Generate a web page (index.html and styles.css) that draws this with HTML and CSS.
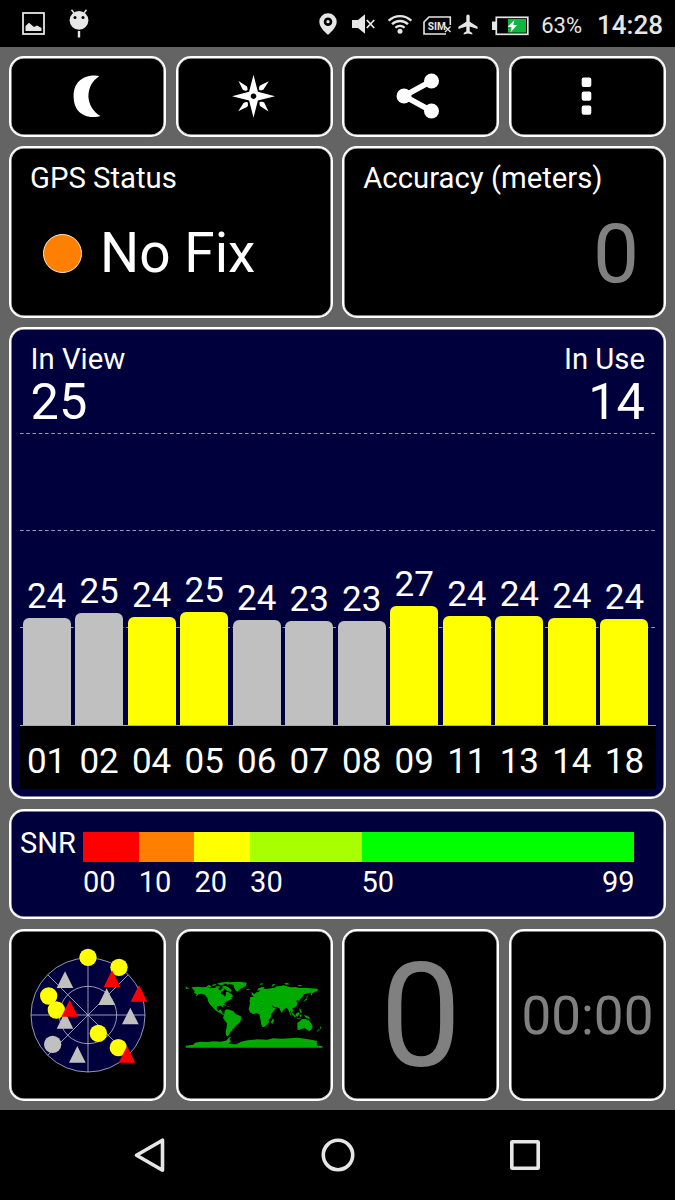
FILE: index.html
```html
<!DOCTYPE html>
<html lang="en">
<head>
  <meta charset="UTF-8">
  <meta name="viewport" content="width=device-width, initial-scale=1.0">
  <title>GPS Test</title>
  <link rel="stylesheet" href="styles.css">
</head>
<body>
  <header class="status-bar">
    <div class="notifications">
      <svg width="23" height="23" viewBox="0 0 23 23"><rect x="1" y="1" width="21" height="21" fill="none" stroke="currentColor" stroke-width="1.8"/><path d="M3.5 19v-5l3.5-3.2 5 4.2 3-1.6 4.5 2.6v3z" fill="currentColor"/></svg>
      <svg class="droid" width="20" height="29" viewBox="0 0 20 29"><circle cx="10" cy="11.3" r="9.4" fill="currentColor"/><path d="M5 4L2.5 .8M15 4l2.5-3.2" stroke="currentColor" stroke-width="1.4"/><path d="M10 22v6.5" stroke="currentColor" stroke-width="2.4"/><circle cx="6" cy="8.6" r="1.5"/><circle cx="14" cy="8.6" r="1.5"/></svg>
    </div>
    <div class="system">
      <svg width="18" height="22" viewBox="0 0 18 22"><path d="M9 .3a8.6 8.6 0 0 0-8.7 8.6C.3 14.8 9 21.8 9 21.8s8.7-7 8.7-12.9A8.6 8.6 0 0 0 9 .3z" fill="currentColor"/><circle cx="9" cy="8.7" r="4.3"/><circle cx="9" cy="8.7" r="1.6" fill="currentColor"/></svg>
      <svg class="mute" width="23" height="20" viewBox="0 0 23 20"><path d="M0 6h6l7-5.8v19.6L6 14H0z" fill="currentColor"/><path d="M14.8 6l7.4 8M22.2 6l-7.4 8" stroke="currentColor" stroke-width="1.8"/></svg>
      <svg class="wifi" width="24" height="20" viewBox="0 0 24 20"><g fill="none" stroke="currentColor" stroke-width="2.3"><path d="M.7 6.7a16 16 0 0 1 22.6 0M4 10.3a11.3 11.3 0 0 1 16 0M7.400 13.7a6.5 6.5 0 0 1 9.2 0"/></g><circle cx="12" cy="17.2" r="2.5" fill="currentColor"/></svg>
      <svg class="sim" width="29" height="19" viewBox="0 0 29 19"><path d="M23 18H1V6l5-5h21.3v8" fill="none" stroke="currentColor" stroke-width="1.6"/><text x="4.8" y="14" font-size="11" font-weight="700" textLength="18" lengthAdjust="spacingAndGlyphs" fill="currentColor">SIM</text><path d="M22 10.5l5.500 5.5M27.5 10.5L22 16" stroke="currentColor" stroke-width="1.4"/></svg>
      <svg class="plane" width="20" height="21" viewBox="0 0 20 21"><path d="M8.300 2.2a1.7 1.7 0 0 1 3.4 0v5.6l7.9 4.9v2.2l-7.9-2.5v4.800l2.6 1.8v1.5L10 19.500l-4.3 1v-1.5l2.6-1.8v-4.8L.4 14.900v-2.200l7.9-4.9z" fill="currentColor"/></svg>
      <svg class="battery" width="37" height="20" viewBox="0 0 37 20"><path d="M0 5.5h4v8.5H0z" fill="currentColor"/><rect x="4.3" y="1.3" width="31.5" height="17" fill="none" stroke="currentColor" stroke-width="1.7"/><path d="M16 3h18v13.6H16z" fill="#0fb83c"/><path d="M22.5 4l-7 7h4l-1 5.5 6.500-7.5h-3.7z" fill="#fff"/></svg>
      <span class="percent">63%</span>
      <span class="clock">14:28</span>
    </div>
  </header>

  <main class="dashboard">
    <button class="card action">
      <svg width="50" height="50" viewBox="0 0 50 50"><path d="M36.3 5.2C30 3 10.600 4.500 10.600 25.200S29 48 37.500 45A23 23 0 0 1 36.300 5.200z"/></svg>
    </button>
    <button class="card action">
      <svg width="50" height="50" viewBox="0 0 50 50">
        <path fill-rule="evenodd" d="M24.5 3.7l4.4 17.1L46 25.200l-17.100 4.400-4.400 17.100-4.400-17.100L3 25.200l17.100-4.400zM24.500 22.400a2.800 2.800 0 1 0 .01 0z"/>
        <path id="ray" d="M9.500 9.900l8.500 5.500q1.300 4-.3 4.200-3 .5-4-1z"/>
        <use href="#ray" transform="rotate(90 24.5 25.2)"/>
        <use href="#ray" transform="rotate(180 24.5 25.2)"/>
        <use href="#ray" transform="rotate(270 24.5 25.2)"/>
      </svg>
    </button>
    <button class="card action">
      <svg width="50" height="50" viewBox="0 0 50 50"><path d="M35.5 10L8 25l27.5 15" fill="none" stroke="#fff" stroke-width="5.5"/><circle cx="8" cy="25" r="7.5"/><circle cx="35.5" cy="10" r="7.5"/><circle cx="35.5" cy="40" r="7.5"/></svg>
    </button>
    <button class="card action">
      <svg width="50" height="50" viewBox="0 0 50 50"><rect x="19.7" y="6.6" width="9.6" height="9.3" rx="2"/><rect x="19.7" y="20.5" width="9.6" height="9.3" rx="2"/><rect x="19.7" y="34.4" width="9.6" height="9.3" rx="2"/></svg>
    </button>

    <section class="card reading">
      <div class="label">GPS Status</div>
      <div class="fix"><span class="led"></span>No Fix</div>
    </section>
    <section class="card reading">
      <div class="label">Accuracy (meters)</div>
      <div class="accuracy">0</div>
    </section>

    <section class="card satellites">
      <div class="counts">
        <div class="count">
          <div class="label">In View</div>
          <div class="total">25</div>
        </div>
        <div class="count right">
          <div class="label">In Use</div>
          <div class="total">14</div>
        </div>
      </div>
      <div class="chart">
        <div class="sat"><span>24</span><div class="bar" style="height: 107px"></div></div>
        <div class="sat"><span>25</span><div class="bar" style="height: 112px"></div></div>
        <div class="sat"><span>24</span><div class="bar used" style="height: 108.3px"></div></div>
        <div class="sat"><span>25</span><div class="bar used" style="height: 113.3px"></div></div>
        <div class="sat"><span>24</span><div class="bar" style="height: 105px"></div></div>
        <div class="sat"><span>23</span><div class="bar" style="height: 104.4px"></div></div>
        <div class="sat"><span>23</span><div class="bar" style="height: 104.4px"></div></div>
        <div class="sat"><span>27</span><div class="bar used" style="height: 119.5px"></div></div>
        <div class="sat"><span>24</span><div class="bar used" style="height: 108.8px"></div></div>
        <div class="sat"><span>24</span><div class="bar used" style="height: 109.5px"></div></div>
        <div class="sat"><span>24</span><div class="bar used" style="height: 106.8px"></div></div>
        <div class="sat"><span>24</span><div class="bar used" style="height: 105.6px"></div></div>
      </div>
      <div class="ids">
        <span>01</span><span>02</span><span>04</span><span>05</span><span>06</span><span>07</span>
        <span>08</span><span>09</span><span>11</span><span>13</span><span>14</span><span>18</span>
      </div>
    </section>

    <section class="card snr">
      <div class="snr-label">SNR</div>
      <div class="scale">
        <div class="step red"></div>
        <div class="step orange"></div>
        <div class="step yellow"></div>
        <div class="step lime"></div>
        <div class="step green"></div>
        <span>00</span>
        <span>10</span>
        <span>20</span>
        <span>30</span>
        <span class="ends"><b>50</b><b>99</b></span>
      </div>
    </section>

    <section class="card tile">
      <!-- Sky view -->
      <svg class="sky" width="130" height="130" viewBox="0 0 390 390">
        <g fill="#00003c" stroke="#b4b4cc" stroke-width="2.5">
          <circle cx="195" cy="195" r="171"/>
          <circle cx="195" cy="195" r="86"/>
          <path d="M195 24v342M24 195h342M74 74l242 242M316 74L74 316"/>
        </g>
        <g fill="#c0c0c0">
          <path d="M126 64l25 50h-50zM251 115l25 50h-50zM322 173l25 50h-50zM126 186l25 50h-50zM163 288l25 50h-50z"/>
          <circle cx="89" cy="283" r="26"/>
        </g>
        <g fill="#ff0">
          <circle cx="195" cy="22" r="26"/>
          <circle cx="288" cy="52" r="26"/>
          <circle cx="77" cy="138" r="26"/>
          <circle cx="100" cy="180" r="26"/>
          <circle cx="226" cy="250" r="26"/>
          <circle cx="286" cy="293" r="26"/>
        </g>
        <path fill="#f00" d="M267 61l25 50h-50zM348 105l25 50h-50zM140 150l25 50h-50zM312 288l25 50h-50z"/>
      </svg>
    </section>
    <section class="card tile">
      <svg width="138" height="67" viewBox="38 67 414 201" fill="#00aa00">
        <!-- Americas -->
        <path d="M40 82l5 5 7 4-12-1zM57 86l20-2 14 2 12-1 10 4 14-2 11 1 2 6 6 1 3-7 7 2-3 6-6 3-2 6 8 3 5 6 3-6-1-7 6-2 7 5 4 2 6 7-8 4 6 3-9 4-8 4-8 5-4 6 1 7-4-1-3-4-10 1-3 4 1 7 4 4 4-4 5-1-1 5 4 2 1 6 6 4-4 1-8-6-9-4-8-6-8-10-6-5-7-11-2-11-7-8-10-4-8 1-10 8 3-7-8-4 2-5-3-4z"/>
        <path d="M103 82l8-3 6 4-4 4-9-1zM118 79l10-3 5 3-10 3zM128 84l12-2 3 5-12 1zM133 75l17-4 22-2-5 4-17 3 7 3-12 1zM150 83l10-1 10 5 8 8-4 6-5-5-5 1-6-6-7-2zM162 73l18-3 22-1 21 3-2 9-6 4-12 6-7 8-5-2-7-12 1-6-12-2-9 1z"/>
        <path d="M147 137l7-2 9 5-4 1-12-4zM164 142l6 1-2 2zM157 156l6-4 8 1 12 5 7 9 9 3 8 4-1 8-4 10-10 7-7 10-6 3 1 5-6 2-2 5 1 1-4 5-3 3-5-3-1-11 3-14 1-11-6-7-6-10 3-7z"/>
        <!-- Africa and Eurasia -->
        <path d="M233 132l10-7 15-1 2 4 12 3 2-2 9 2 3 7 7 12 5 2 9-2-2 6-9 11-1 11-6 5 1 7-5 7-7 7-8 1-4-10-1-9-2-10-2-9-8-3-12 2-8-5-4-9zM303 179l2 6-4 10-5-2 1-7zM220 92l8-2 4 2-5 3zM237 100l5 3 3 6-8 1 2-4zM234 115h10l-4-6 8-4 4-4 8-1 2-5-7 1 2-6 11-5 8 1-2 4 8 1 13-2 12-2 6-4 14-1 6-2 11 3 11 3 14-1 14 3 18-1 14 2 21 1v7l-9 3-6 3-4 8-2-1 2-8-9 1-13 4-5 9-8 7-2 6-3-5-6 3 5 6-3 8-7 6-6 1 3 8-4 6-4-5-2 1 4 13-3-1-6-17-5-6-10 6-4 10-4-5-4-9-9-4-8-1-5-5 3 8 8 1-4 7-10 5-7-10-5-12-13-3-3-7-8 2 2 4-4 1-7-9-6 1-5 5-9-1z"/>
        <path d="M260 76l10-2 4 2-8 2zM297 84l4-7 9-2-8 8zM336 74l10-1 6 4-12 1zM375 80l10-1 5 3-10 1zM404 108l2 7-4 2zM402 118l3 3-6 6-8 3 7-6z"/>
        <!-- Oceania -->
        <path d="M356 158l9 8 6 9-4 1-10-13zM370 166l8-6 3 5-5 9-6-2zM382 148l4 6 3 8-4 1-4-9zM383 167l5 1-2 8-4-2zM372 178l11 1 6 2-14-1zM394 169l12 3 8 7-7 1-8-4zM375 192l8-5 7-6 7 0 6 1 2 5 2-6 4 7 7 8 3 8-4 9-7 4-6-4-6-4-9 1-9 4-5-2zM409 216l4-1-2 4zM443 203l4 4-4 5zM440 211l2 2-7 6-1-2z"/>
        <!-- Antarctica -->
        <path d="M40 261l23-3 5-6 17-3 22 1 17-2 20 1 17-3 10-10 6-2-6 7 5 7-8 8 24 1 14-8 20-4 28-3 30 1 18-4 26 1 25-1 22-2 22 3 24 4 14 3-2 7 3 8h14v5H40z"/>
      </svg>
    </section>
    <section class="card tile speed">0</section>
    <section class="card tile timer">00:00</section>
  </main>

  <nav class="nav-bar">
    <svg width="36" height="36" viewBox="0 0 36 36"><path d="M30.500 3.200v30L4.500 18.200z"/></svg>
    <svg width="36" height="36" viewBox="0 0 36 36"><circle cx="18" cy="18" r="14.7"/></svg>
    <svg width="36" height="36" viewBox="0 0 36 36"><rect x="4.8" y="4.8" width="26.4" height="26.4" rx=".5"/></svg>
  </nav>
</body>
</html>
```
FILE: styles.css
```css
* {
  box-sizing: border-box;
}

body {
  margin: 0;
  width: 675px;
  height: 1200px;
  display: flex;
  flex-direction: column;
  overflow: hidden;
  background: #646464;
  color: #fff;
  font-family: Roboto, "Liberation Sans", sans-serif;
}

svg {
  display: block;
  flex: none;
}

/* Android status bar */
.status-bar {
  height: 47px;
  flex: none;
  display: flex;
  justify-content: space-between;
  align-items: center;
  padding: 0 12px 0 22px;
  background: #000;
  color: #e6e6e6;
}

.notifications,
.system {
  display: flex;
  align-items: center;
}

.droid {
  margin-left: 24px;
}

.mute {
  margin-left: 15px;
}

.wifi {
  margin-left: 13px;
}

.sim {
  margin: 3px 0 0 11px;
}

.plane {
  margin: 2px 0 0 6px;
}

.battery {
  margin: 4px 0 0 14px;
}

.percent {
  margin: 3px 0 0 12px;
  font-size: 22px;
}

.clock {
  margin: 3px 0 0 15px;
  font-size: 26px;
  font-weight: 500;
}

/* Cards */
.dashboard {
  flex: none;
  height: 1063px;
  display: grid;
  grid-template-columns: repeat(4, 1fr);
  grid-template-rows: 80.5px 171.5px 472px 110.5px 172px;
  gap: 9.5px;
  padding: 9px 9px 0;
}

.card {
  min-width: 0;
  background: #000;
  border: 2px solid #fff;
  border-radius: 15px;
  box-shadow: inset 0 0 0 .5px #fff;
}

.action {
  display: flex;
  align-items: center;
  justify-content: center;
  padding: 0;
  fill: #fff;
}

.reading {
  grid-column: span 2;
  padding: 13px 25px 0 19px;
}

.label {
  font-size: 29.3px;
  line-height: 34px;
}

.fix {
  display: flex;
  align-items: center;
  margin-top: 26px;
  padding-left: 13px;
  font-size: 55px;
  line-height: 64px;
}

.led {
  width: 39px;
  height: 39px;
  margin-right: 18px;
  background: #ff8000;
  border: 1px solid #ffe8c8;
  border-radius: 50%;
}

.accuracy {
  margin-top: 11px;
  font-size: 82px;
  line-height: 96px;
  text-align: right;
  color: #808080;
}

/* Satellite signal chart */
.satellites {
  grid-column: span 4;
  display: flex;
  flex-direction: column;
  padding: 13px 8px 0 8.5px;
  background: #00003c;
}

.counts {
  display: flex;
  justify-content: space-between;
  padding: 0 11px;
}

.right {
  text-align: right;
}

.total {
  font-size: 50.5px;
  line-height: 52px;
}

.chart {
  height: 293px;
  margin-top: 4px;
  padding: 0 7.5px 0 3px;
  display: flex;
  align-items: flex-end;
  gap: 4.4px;
  background-image:
    linear-gradient(90deg, #9a9ab8 50%, transparent 50%),
    linear-gradient(90deg, #9a9ab8 50%, transparent 50%),
    linear-gradient(90deg, #9a9ab8 50%, transparent 50%);
  background-size: 6.25px 1px;
  background-position: 0 1px, 0 98px, 0 195px;
  background-repeat: repeat-x;
}

.sat {
  flex: 1;
  text-align: center;
}

.sat span {
  display: block;
  margin-bottom: 4px;
  font-size: 35px;
  line-height: 35px;
}

.bar {
  background: #c0c0c0;
  border-radius: 6px 6px 0 0;
}

.bar.used {
  background: #ff0;
}

.ids {
  height: 64px;
  display: flex;
  gap: 4.4px;
  padding: 9px 7.5px 0 3px;
  background: #000;
  border-top: 1px solid #aaa;
  font-size: 35px;
  line-height: 54px;
  text-align: center;
}

.ids span {
  flex: 1;
}

/* Signal to noise legend */
.snr {
  grid-column: span 4;
  display: flex;
  padding: 17px 29.5px 0 9px;
  background: #00003c;
  font-size: 29px;
  line-height: 30px;
}

.snr-label {
  width: 63px;
}

.scale {
  flex: 1;
  display: grid;
  grid-template-columns: 10fr 10fr 10fr 20fr 49fr;
  grid-template-rows: 30px 30px;
  row-gap: 5px;
  padding-top: 4px;
}

.red {
  background: #f00;
}

.orange {
  background: #ff8000;
}

.yellow {
  background: #ff0;
}

.lime {
  background: #a8ff00;
}

.green {
  background: #0f0;
}

.ends {
  display: flex;
  justify-content: space-between;
}

.ends b {
  font-weight: 400;
}

/* Bottom tiles */
.tile {
  display: flex;
  align-items: center;
  justify-content: center;
  color: #808080;
}

.sky {
  overflow: visible;
}

.speed {
  padding-top: 3px;
  font-size: 145px;
}

.timer {
  padding-top: 3px;
  font-size: 53px;
}

/* Navigation keys */
.nav-bar {
  height: 90px;
  flex: none;
  display: flex;
  align-items: center;
  justify-content: center;
  gap: 151.5px;
  background: #000;
  fill: none;
  stroke: #e6e6e6;
  stroke-width: 3.6;
  stroke-linejoin: round;
}
```
